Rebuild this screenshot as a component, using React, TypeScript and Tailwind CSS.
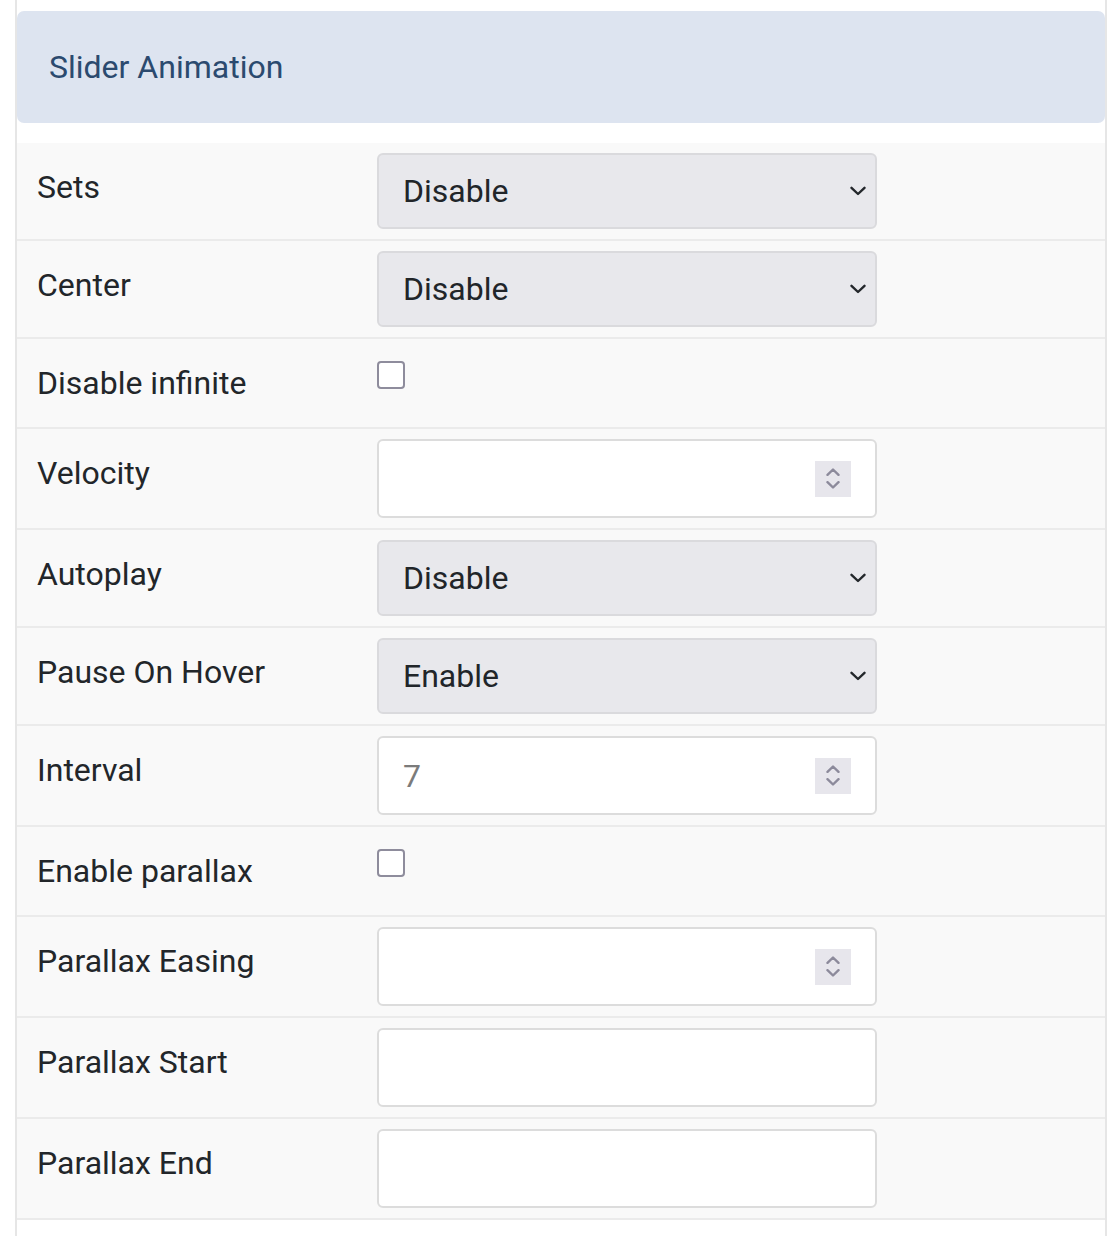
import React from "react";

type Row =
  | { label: string; type: "select"; value: string }
  | { label: string; type: "checkbox" }
  | { label: string; type: "number"; value?: string }
  | { label: string; type: "text" };

const rows: Row[] = [
  { label: "Sets", type: "select", value: "Disable" },
  { label: "Center", type: "select", value: "Disable" },
  { label: "Disable infinite", type: "checkbox" },
  { label: "Velocity", type: "number" },
  { label: "Autoplay", type: "select", value: "Disable" },
  { label: "Pause On Hover", type: "select", value: "Enable" },
  { label: "Interval", type: "number", value: "7" },
  { label: "Enable parallax", type: "checkbox" },
  { label: "Parallax Easing", type: "number" },
  { label: "Parallax Start", type: "text" },
  { label: "Parallax End", type: "text" },
];

function Chevron() {
  return (
    <svg width="16" height="10" viewBox="0 0 16 10" fill="none">
      <path d="M1.5 1.8 L8 8 L14.5 1.8" stroke="#23272b" strokeWidth="2.4" strokeLinecap="round" strokeLinejoin="round" />
    </svg>
  );
}

function Spinner() {
  return (
    <div className="flex h-[36px] w-[36px] flex-col items-center justify-center gap-[5px] bg-[#e7e6ec]">
      <svg width="14" height="8" viewBox="0 0 14 8" fill="none">
        <path d="M1.5 6.8 L7 1.5 L12.5 6.8" stroke="#8c8a9b" strokeWidth="2.4" strokeLinecap="round" strokeLinejoin="round" />
      </svg>
      <svg width="14" height="8" viewBox="0 0 14 8" fill="none">
        <path d="M1.5 1.2 L7 6.5 L12.5 1.2" stroke="#8c8a9b" strokeWidth="2.4" strokeLinecap="round" strokeLinejoin="round" />
      </svg>
    </div>
  );
}

function Control({ row }: { row: Row }) {
  if (row.type === "select") {
    return (
      <div className="flex h-[76px] w-[500px] items-center justify-between rounded-[6px] border-2 border-[#dadadd] bg-[#e8e8ec] pl-[24px] pr-[9px] text-[32px] text-[#212529]">
        <span>{row.value}</span>
        <Chevron />
      </div>
    );
  }
  if (row.type === "checkbox") {
    return <div className="mt-[12px] h-[28px] w-[28px] rounded-[4px] border-2 border-[#8e8c9c] bg-white" />;
  }
  if (row.type === "number") {
    return (
      <div className="flex h-[79px] w-[500px] items-center justify-between rounded-[6px] border-2 border-[#dcdcdc] bg-white pl-[24px] pr-[24px] text-[32px] text-[#7b7b7b]">
        <span>{row.value ?? ""}</span>
        <Spinner />
      </div>
    );
  }
  return <div className="h-[79px] w-[500px] rounded-[6px] border-2 border-[#dcdcdc] bg-white" />;
}

export default function App() {
  return (
    <div className="min-h-[1236px] bg-white" style={{ fontFamily: "Roboto, 'Noto Sans', sans-serif" }}>
      <div className="ml-[15px] min-h-[1236px] w-[1092px] border-x-2 border-[#e6e6e6] pt-[11px]">
        <div className="flex h-[112px] items-center rounded-[7px] bg-[#dde4f0] pl-[32px] text-[32px] text-[#2b4a6f]">
          Slider Animation
        </div>
        <div className="mt-[20px]">
          {rows.map((row) => (
            <div key={row.label} className="flex items-start border-b-2 border-[#ebebeb] bg-[#f9f9f9] py-[10px]">
              <div className="w-[360px] py-[10px] pl-[20px] text-[32px] leading-[48px] text-[#22262a]">{row.label}</div>
              <Control row={row} />
            </div>
          ))}
        </div>
      </div>
    </div>
  );
}
